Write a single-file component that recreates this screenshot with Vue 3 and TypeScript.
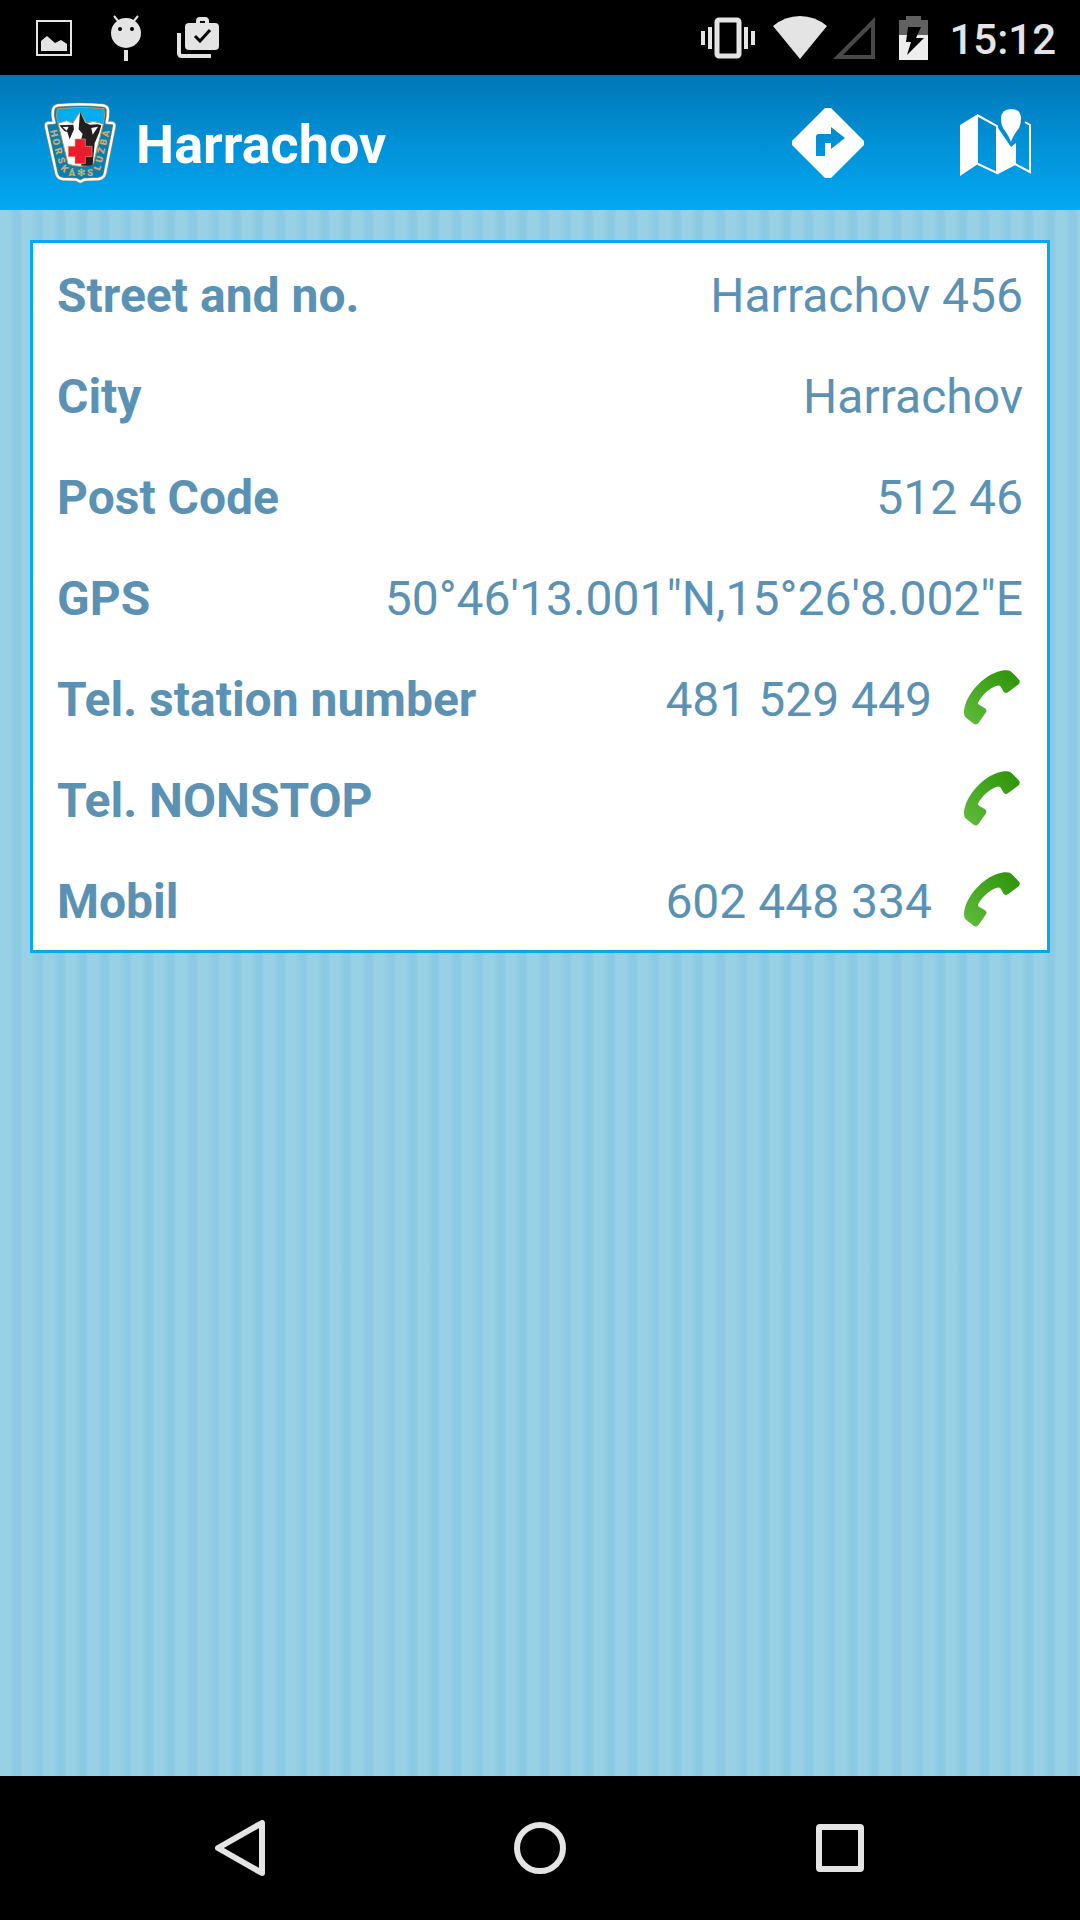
<script setup lang="ts">
interface DetailRow {
  label: string
  value: string
  phone?: boolean
}

const rows: DetailRow[] = [
  { label: 'Street and no.', value: 'Harrachov 456' },
  { label: 'City', value: 'Harrachov' },
  { label: 'Post Code', value: '512 46' },
  { label: 'GPS', value: '50°46\'13.001"N,15°26\'8.002"E' },
  { label: 'Tel. station number', value: '481 529 449', phone: true },
  { label: 'Tel. NONSTOP', value: '', phone: true },
  { label: 'Mobil', value: '602 448 334', phone: true },
]
</script>

<template>
  <div class="screen">
    <div class="status">
      <div class="notices">
        <svg width="36" height="36" viewBox="0 0 36 36">
          <rect x="1" y="1" width="34" height="34" fill="none" stroke="#e4e4e4" stroke-width="2" />
          <path d="M5 31V21l6-5 8 7 6-3 6 4v7z" fill="#e4e4e4" />
        </svg>
        <svg width="33" height="46" viewBox="-3 0 33 46" fill="#e4e4e4">
          <path d="M3 1l5 6M27 1l-5 6" stroke="#e4e4e4" stroke-width="2" />
          <circle cx="15" cy="18" r="15" />
          <rect x="13" y="35" width="4" height="11" />
          <circle cx="9" cy="14" r="2" fill="#000" />
          <circle cx="21" cy="14" r="2" fill="#000" />
        </svg>
        <svg width="42" height="41" viewBox="0 0 42 41">
          <path d="M2 16v20q0 3 3 3h29" fill="none" stroke="#e4e4e4" stroke-width="4" />
          <rect x="8" y="6" width="34" height="27" rx="4" fill="#e4e4e4" />
          <path d="M21 7V4q0-2 2-2h5q2 0 2 2v3" fill="none" stroke="#e4e4e4" stroke-width="4" />
          <path d="M18 19l5 5 10-11" fill="none" stroke="#000" stroke-width="3" />
        </svg>
      </div>
      <div class="signals">
        <svg width="54" height="42" viewBox="0 0 54 42" fill="#e4e4e4">
          <rect x="16" y="3" width="22" height="36" rx="2" fill="none" stroke="#e4e4e4" stroke-width="5" />
          <path d="M0 14h4v14H0zM7 10h4v22H7zM43 10h4v22h-4zM50 14h4v14h-4z" />
        </svg>
        <svg class="wifi" width="54" height="43" viewBox="0 0 54 43">
          <path d="M0 10Q12 0 27 0t27 10L27 43z" fill="#e4e4e4" />
        </svg>
        <svg class="cell" width="42" height="42" viewBox="0 0 42 42">
          <path d="M42 0v42H0zM38 10L10 38h28z" fill="#484848" fill-rule="evenodd" />
        </svg>
        <svg class="battery" width="29" height="44" viewBox="0 0 29 44">
          <path d="M0 19V4h7V0h15v4h7v15z" fill="#616161" />
          <path d="M0 19h29v25H0z" fill="#eee" />
          <path d="M9 11h13l-5 11h8L8 39l4-13H7z" fill="#000" />
        </svg>
        <span class="clock">15:12</span>
      </div>
    </div>

    <header class="bar">
      <svg class="badge" width="74" height="82" viewBox="36 36 222 246">
        <path
          d="M84 46Q150 40 218 46Q233 48 234 60Q235 80 230 98L248 99Q254 101 253 109L225 250Q222 265 205 267L162 269L151 275L140 269L98 267Q82 265 79 250L48 109Q47 100 54 99L73 98Q66 78 69 60Q71 48 84 46Z"
          fill="#0a7fae" stroke="#b09468" stroke-width="10" stroke-linejoin="round"
        />
        <path
          d="M84 46Q150 40 218 46Q233 48 234 60Q235 80 230 98L248 99Q254 101 253 109L225 250Q222 265 205 267L162 269L151 275L140 269L98 267Q82 265 79 250L48 109Q47 100 54 99L73 98Q66 78 69 60Q71 48 84 46Z"
          fill="none" stroke="#fff" stroke-width="7" stroke-linejoin="round"
        />
        <path d="M82 56Q150 48 222 56Q226 78 220 100H84Q76 78 82 56Z" fill="#00aeef" stroke="#b09468" stroke-width="3" />
        <path d="M84 100L110 92L128 100L150 66L170 100L190 94L220 102L190 222Q150 236 114 222Z" fill="#fff" stroke="#b09468" stroke-width="3" />
        <path d="M150 66L166 98L180 104L204 103L214 106L208 126L194 160L188 224Q170 230 152 226L162 212L148 168L158 132L146 118Z" fill="#231f20" />
        <path d="M88 106L130 104L132 118L119 148L112 126L104 124Z" fill="#231f20" />
        <path d="M98 111l18-1-6 12zM204 110l-16 24-4-20z" fill="#fff" />
        <path d="M135 147h31v22h20v31h-20v21h-31v-21h-20v-31h20z" fill="#ed1b2e" stroke="#c9a074" stroke-width="2" />
        <g class="badge-text">
          <text transform="translate(72 130) rotate(78)" y="10">H</text>
          <text transform="translate(79 156) rotate(76)" y="10">O</text>
          <text transform="translate(86 183) rotate(74)" y="10">R</text>
          <text transform="translate(94 211) rotate(70)" y="10">S</text>
          <text transform="translate(104 236) rotate(45)" y="10">K</text>
          <text transform="translate(125 248)" y="10">Á</text>
          <text transform="translate(152 248)" y="10">✻</text>
          <text transform="translate(180 248)" y="10">S</text>
          <text transform="translate(202 232) rotate(-70)" y="10">L</text>
          <text transform="translate(208 208) rotate(-74)" y="10">U</text>
          <text transform="translate(214 182) rotate(-76)" y="10">Ž</text>
          <text transform="translate(220 156) rotate(-78)" y="10">B</text>
          <text transform="translate(227 131) rotate(-78)" y="10">A</text>
        </g>
      </svg>
      <h1>Harrachov</h1>
      <button type="button" class="action" aria-label="Directions">
        <svg width="72" height="70" viewBox="0 0 72 70">
          <path d="M33 0h6L72 33v4L39 70h-6L0 37v-4zM24 48h9V35h6v6l14-11L39 19v7H27q-3 0-3 3z" fill="#fff" fill-rule="evenodd" />
        </svg>
      </button>
      <button type="button" class="action" aria-label="Map">
        <svg width="71" height="68" viewBox="0 0 71 68" fill="#fff">
          <path d="M0 16L18 5v50L0 67z" />
          <path d="M17 6l20 11v47L18 55M37 64l18-9 15 8V16l-5-3" fill="none" stroke="#fff" stroke-width="2" />
          <path d="M36 16l15 22 5-4v21l-18 10h-2z" />
          <path d="M51 33Q49 27 43 19Q41 15 41 10Q41 0 51 0T61 10Q61 15 59 19Q53 27 51 33Z" />
        </svg>
      </button>
    </header>

    <main class="content">
      <dl class="card">
        <div v-for="row in rows" :key="row.label" class="row">
          <dt>{{ row.label }}</dt>
          <dd>
            <span class="value">{{ row.value }}</span>
            <button v-if="row.phone" type="button" class="call" :aria-label="'Call ' + row.label">
              <svg width="56" height="55" viewBox="0 0 168 165">
                <defs>
                  <linearGradient id="leaf" x1="0" y1="1" x2="1" y2="0">
                    <stop offset="0.1" stop-color="#5cb838" />
                    <stop offset="0.9" stop-color="#30960c" />
                  </linearGradient>
                </defs>
                <path
                  d="M120 1Q135 0 142 5L165 29Q170 36 164 43L132 67Q124 72 119 65L109 49Q105 44 97 48C76 55 54 76 43 96Q40 101 45 104L63 115Q70 120 66 127L44 158Q38 166 30 162L6 143Q0 138 0 128C1 75 63 8 120 1Z"
                  fill="url(#leaf)"
                />
              </svg>
            </button>
          </dd>
        </div>
      </dl>
    </main>

    <nav class="nav">
      <button type="button" aria-label="Back">
        <svg width="50" height="56" viewBox="0 0 50 56">
          <path d="M47 3v50L3 28z" fill="none" stroke="#e4e4e4" stroke-width="6" stroke-linejoin="round" />
        </svg>
      </button>
      <button type="button" aria-label="Home">
        <svg width="52" height="52" viewBox="0 0 52 52">
          <circle cx="26" cy="26" r="23" fill="none" stroke="#e4e4e4" stroke-width="6" />
        </svg>
      </button>
      <button type="button" aria-label="Recent apps">
        <svg width="48" height="48" viewBox="0 0 48 48">
          <rect x="3" y="3" width="42" height="42" rx="1" fill="none" stroke="#e4e4e4" stroke-width="6" stroke-linejoin="round" />
        </svg>
      </button>
    </nav>
  </div>
</template>

<style>
body {
  margin: 0;
}
</style>

<style scoped>
.screen {
  display: flex;
  flex-direction: column;
  min-height: 100vh;
  font-family: Roboto, sans-serif;
}

svg {
  display: block;
  flex: none;
}

button {
  display: flex;
  align-items: center;
  justify-content: center;
  padding: 0;
  border: 0;
  background: none;
}

.status {
  display: flex;
  justify-content: space-between;
  align-items: center;
  height: 75px;
  padding: 0 24px 0 36px;
  background: #000;
}

.notices,
.signals {
  display: flex;
  align-items: center;
}

.notices {
  gap: 36px;
}

.wifi {
  margin-left: 18px;
}

.cell {
  margin-left: 6px;
}

.battery {
  margin: 0 21px 0 24px;
}

.clock,
.bar h1,
dt,
.value {
  padding-top: 4px;
}

.clock {
  color: #e4e4e4;
  font-size: 42px;
  font-weight: 500;
  line-height: 48px;
}

.bar {
  display: flex;
  align-items: center;
  height: 135px;
  padding: 0 49px 0 42px;
  background: linear-gradient(#0077b7, #03a9f4);
}

.bar h1 {
  flex: 1;
  margin: 0 0 0 20px;
  color: #fff;
  font-size: 54px;
  font-weight: 700;
  line-height: 64px;
}

.action + .action {
  margin-left: 96px;
}

.badge-text {
  fill: #d0ac72;
  font-size: 29px;
  font-weight: 900;
  text-anchor: middle;
}

.content {
  flex: 1;
  padding: 30px;
  background: repeating-linear-gradient(90deg, #98d0e5 0, #98d0e5 10px, #8ecce2 13px, #8acae4 16px, #8ccbe4 20px, #98d0e5 22px);
}

.card {
  margin: 0;
  border: 3px solid #03a9f4;
  background: #fff;
}

.row {
  display: flex;
  align-items: center;
  justify-content: space-between;
  height: 101px;
  padding: 0 24px;
  color: #5b92b4;
  font-size: 48px;
  line-height: 56px;
}

dt {
  font-weight: 700;
}

dd {
  display: flex;
  align-items: center;
  margin: 0;
}

.call {
  margin: 0 3px 0 32px;
}

.nav {
  display: flex;
  justify-content: center;
  height: 144px;
  background: #000;
}

.nav button {
  width: 300px;
}
</style>
